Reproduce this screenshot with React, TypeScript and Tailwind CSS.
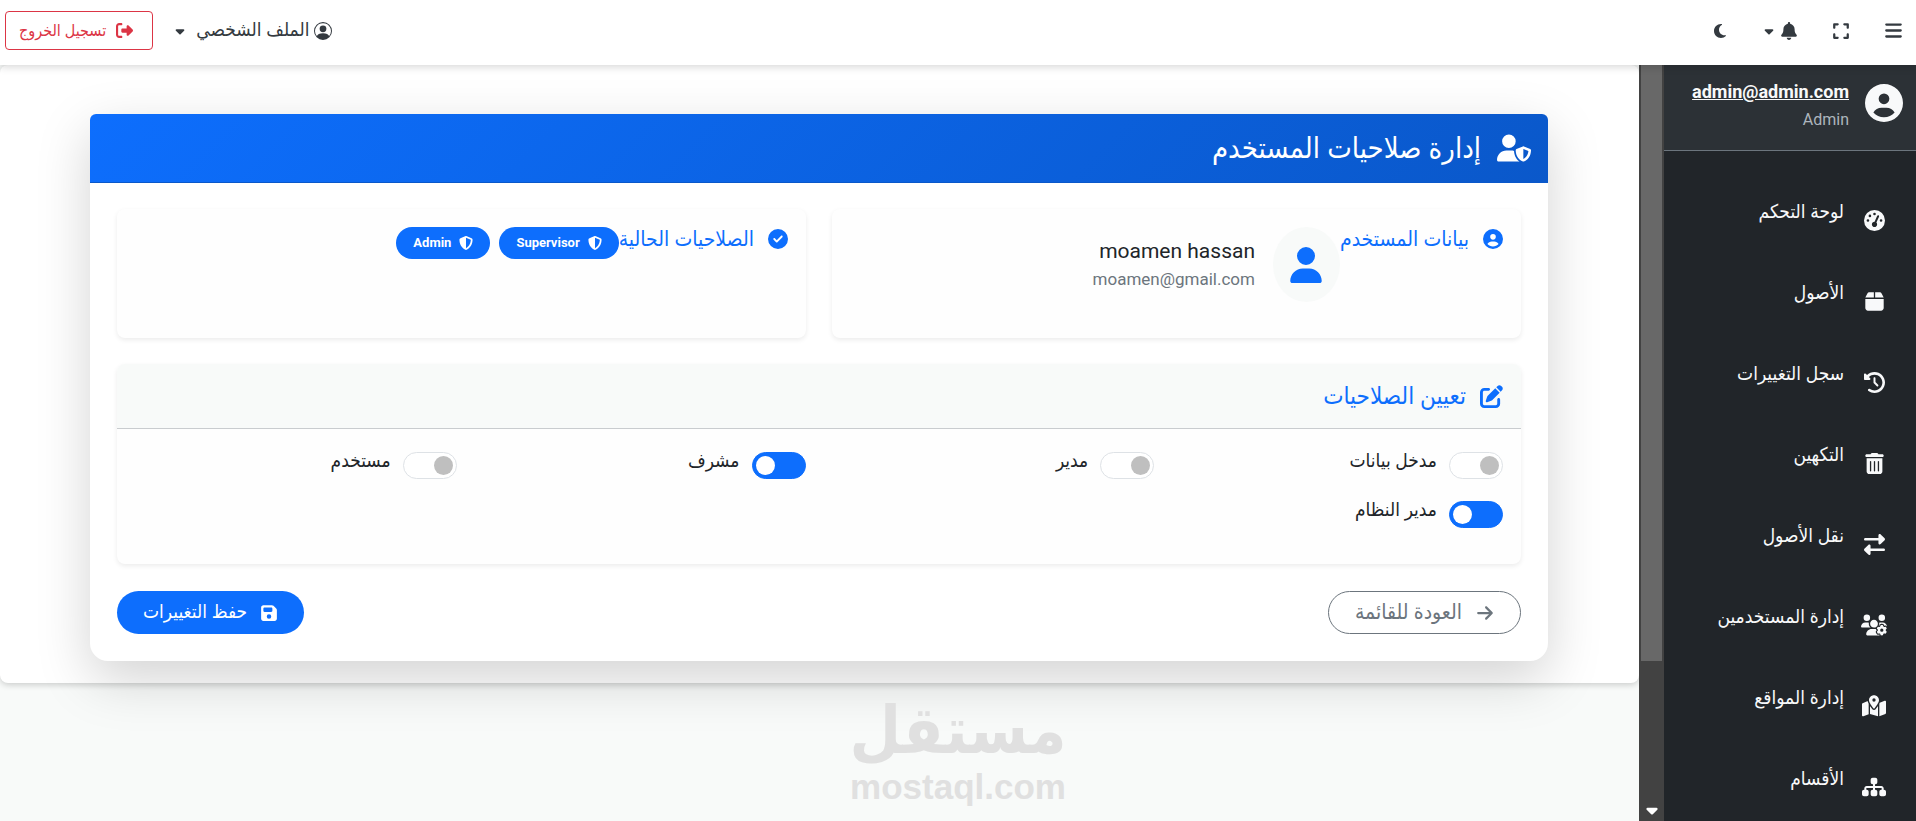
import type { ReactNode } from 'react'
import { BsPersonCircle } from 'react-icons/bs'
import {
  FaArrowRight,
  FaBars,
  FaBell,
  FaBox,
  FaCaretDown,
  FaCircleCheck,
  FaCircleUser,
  FaClockRotateLeft,
  FaExpand,
  FaFloppyDisk,
  FaGaugeHigh,
  FaMapLocationDot,
  FaMoon,
  FaPenToSquare,
  FaRightFromBracket,
  FaRightLeft,
  FaShieldHalved,
  FaSitemap,
  FaTrashCan,
  FaUser,
  FaUserShield,
  FaUsersGear,
} from 'react-icons/fa6'

const navItems = [
  { label: 'لوحة التحكم', icon: FaGaugeHigh, size: 21 },
  { label: 'الأصول', icon: FaBox, size: 21 },
  { label: 'سجل التغييرات', icon: FaClockRotateLeft, size: 21 },
  { label: 'التكهين', icon: FaTrashCan, size: 21 },
  { label: 'نقل الأصول', icon: FaRightLeft, size: 21 },
  { label: 'إدارة المستخدمين', icon: FaUsersGear, size: 26 },
  { label: 'إدارة المواقع', icon: FaMapLocationDot, size: 24 },
  { label: 'الأقسام', icon: FaSitemap, size: 24 },
]

const roles = [
  { id: 'data-entry', label: 'مدخل بيانات', active: false },
  { id: 'manager', label: 'مدير', active: false },
  { id: 'supervisor', label: 'مشرف', active: true },
  { id: 'user', label: 'مستخدم', active: false },
  { id: 'admin', label: 'مدير النظام', active: true },
]

function TopBar() {
  return (
    <header className="relative z-10 flex h-[65px] shrink-0 items-center justify-between bg-white pr-[13px] pb-[4px] pl-[5px] text-[#343a40] shadow-[0_2px_8px_rgba(0,0,0,0.16)]">
      <div className="flex items-center gap-[34px]">
        <button type="button" aria-label="القائمة">
          <FaBars size={19} />
        </button>
        <button type="button" aria-label="ملء الشاشة">
          <FaExpand size={18} />
        </button>
        <button type="button" aria-label="الإشعارات" className="flex items-center gap-1">
          <FaBell size={18} />
          <FaCaretDown size={14} />
        </button>
        <button type="button" aria-label="الوضع الليلي">
          <FaMoon size={16} />
        </button>
      </div>
      <div className="flex items-center gap-5">
        <button type="button" className="flex items-center gap-[5px] text-[19px]">
          <BsPersonCircle size={18} />
          <span>الملف الشخصي</span>
          <FaCaretDown size={14} className="mr-1" />
        </button>
        <button
          type="button"
          className="flex h-[39px] items-center gap-[10px] rounded border border-[#dc3545] pr-[19px] pl-[13px] text-base text-[#dc3545]"
        >
          <FaRightFromBracket size={17} />
          <span>تسجيل الخروج</span>
        </button>
      </div>
    </header>
  )
}

function Sidebar() {
  return (
    <aside className="w-[252px] shrink-0 overflow-hidden bg-[#212529] text-[#f8f9fa]">
      <div className="flex h-[86px] items-start gap-4 border-b border-[#6c757d] bg-[#2c3136] pt-[15px] pr-[13px]">
        <FaCircleUser size={38} className="mt-1" />
        <div className="text-right">
          <a href="#profile" className="block text-lg leading-6 font-bold underline">
            admin@admin.com
          </a>
          <span className="block text-base leading-8 text-[#adb5bd]">Admin</span>
        </div>
      </div>
      <nav className="pt-[40px]">
        {navItems.map(({ label, icon: Icon, size }) => (
          <a key={label} href="#" className="flex h-[81px] gap-4 pt-[5px] pr-[28px]">
            <span className="flex h-[37px] w-[28px] items-end justify-center">
              <span className="flex h-[26px] items-center">
                <Icon size={size} />
              </span>
            </span>
            <span className="text-[19px] leading-8">{label}</span>
          </a>
        ))}
      </nav>
    </aside>
  )
}

function ScrollTrack() {
  return (
    <div className="flex w-[25px] shrink-0 flex-col bg-[#424242] px-[2px]">
      <div className="h-[596px] bg-[#686868]" />
      <div className="mt-auto flex justify-center pb-[2px] text-white">
        <FaCaretDown size={18} />
      </div>
    </div>
  )
}

function Panel({ children }: { children: ReactNode }) {
  return (
    <section className="flex min-h-[129px] items-start rounded-lg bg-[#fefefe] p-[18px] shadow-[0_2px_5px_rgba(0,0,0,0.08)]">
      {children}
    </section>
  )
}

function Badge({ label }: { label: string }) {
  return (
    <span className="flex h-8 items-center gap-2 rounded-full bg-[#0d6efd] px-[17px] text-[13px] font-bold text-white">
      <FaShieldHalved size={14} />
      {label}
    </span>
  )
}

function RoleSwitch({ id, label, active }: { id: string; label: string; active: boolean }) {
  return (
    <div className="flex h-8 gap-3">
      <input
        id={id}
        type="checkbox"
        role="switch"
        defaultChecked={active}
        className="relative mt-[5px] h-[27px] w-[54px] appearance-none rounded-full border border-[#dee2e6] bg-white before:absolute before:top-[3px] before:right-[3px] before:size-[19px] before:rounded-full before:bg-[#bfbfbf] checked:border-[#0d6efd] checked:bg-[#0d6efd] checked:before:right-[30px] checked:before:bg-white"
      />
      <label htmlFor={id} className="text-[19px] leading-7 text-[#212529]">
        {label}
      </label>
    </div>
  )
}

function PermissionsCard() {
  return (
    <div className="rounded-t-md rounded-b-[18px] bg-white shadow-[0_18px_54px_rgba(0,0,0,0.175)]">
      <div className="flex h-[69px] items-center gap-4 rounded-t-md border-b border-[#0a58ca] bg-[linear-gradient(135deg,#0d6efd,#0a58ca)] px-[17px] text-white">
        <FaUserShield size={34} />
        <h1 className="text-[29px] leading-9">إدارة صلاحيات المستخدم</h1>
      </div>
      <form className="px-[27px] pt-[26px] pb-[27px]" onSubmit={(e) => e.preventDefault()}>
        <div className="grid grid-cols-2 gap-[26px]">
          <Panel>
            <div className="flex items-center gap-[14px] text-[#0d6efd]">
              <FaCircleUser size={20} />
              <h2 className="text-[21px] leading-6">بيانات المستخدم</h2>
            </div>
            <div className="flex h-[75px] w-[67px] shrink-0 items-center justify-center rounded-[50%] bg-[#f8faf9] text-[#0d6efd]">
              <FaUser size={36} />
            </div>
            <div className="mr-[18px] pt-2 text-right">
              <p className="text-[21px] leading-8 text-[#212529]">moamen hassan</p>
              <p className="text-[17px] leading-6 text-[#6c757d]">moamen@gmail.com</p>
            </div>
          </Panel>
          <Panel>
            <div className="flex items-center gap-[14px] text-[#0d6efd]">
              <FaCircleCheck size={20} />
              <h2 className="text-[21px] leading-6">الصلاحيات الحالية</h2>
            </div>
            <div className="flex gap-[9px]">
              <Badge label="Supervisor" />
              <Badge label="Admin" />
            </div>
          </Panel>
        </div>

        <section className="mt-[26px] rounded-lg bg-[#fefefe] pb-[36px] shadow-[0_2px_5px_rgba(0,0,0,0.08)]">
          <div className="flex h-[65px] items-center gap-[14px] rounded-t-lg border-b border-[#c9cccf] bg-[#f8faf9] px-[18px] text-[#0d6efd]">
            <FaPenToSquare size={23} />
            <h2 className="text-2xl">تعيين الصلاحيات</h2>
          </div>
          <div className="grid grid-cols-4 gap-x-[27px] gap-y-[17px] px-[18px] pt-[18px]">
            {roles.map((role) => (
              <RoleSwitch key={role.id} {...role} />
            ))}
          </div>
        </section>

        <div className="mt-[27px] flex justify-between">
          <button
            type="button"
            className="flex h-[43px] items-center gap-[14px] rounded-full border border-[#6c757d] px-[26px] text-[21px] text-[#6c757d]"
          >
            <FaArrowRight size={18} />
            <span>العودة للقائمة</span>
          </button>
          <button
            type="submit"
            className="flex h-[43px] items-center gap-[13px] rounded-full bg-[#0d6efd] px-[26px] text-[19px] text-white"
          >
            <FaFloppyDisk size={18} />
            <span>حفظ التغييرات</span>
          </button>
        </div>
      </form>
    </div>
  )
}

export default function App() {
  return (
    <div
      dir="rtl"
      className="flex h-screen flex-col overflow-hidden bg-[#f8faf9] font-['Roboto','DejaVu_Sans_Condensed','DejaVu_Sans',sans-serif]"
    >
      <TopBar />
      <div className="flex min-h-0 flex-1">
        <Sidebar />
        <ScrollTrack />
        <main className="min-w-0 flex-1 overflow-hidden">
          <div className="rounded-lg bg-white pt-[49px] pr-[91px] pb-[22px] pl-[90px] shadow-[0_2px_6px_rgba(0,0,0,0.18)]">
            <PermissionsCard />
          </div>
        </main>
      </div>
      <div className="pointer-events-none absolute inset-x-0 bottom-[18px] flex flex-col items-center font-bold text-[#e0e0e0]">
        <span className="text-[66px] leading-[80px]">مستقل</span>
        <span dir="ltr" className="font-['Liberation_Sans',sans-serif] text-[35px] leading-8">
          mostaql.com
        </span>
      </div>
    </div>
  )
}
